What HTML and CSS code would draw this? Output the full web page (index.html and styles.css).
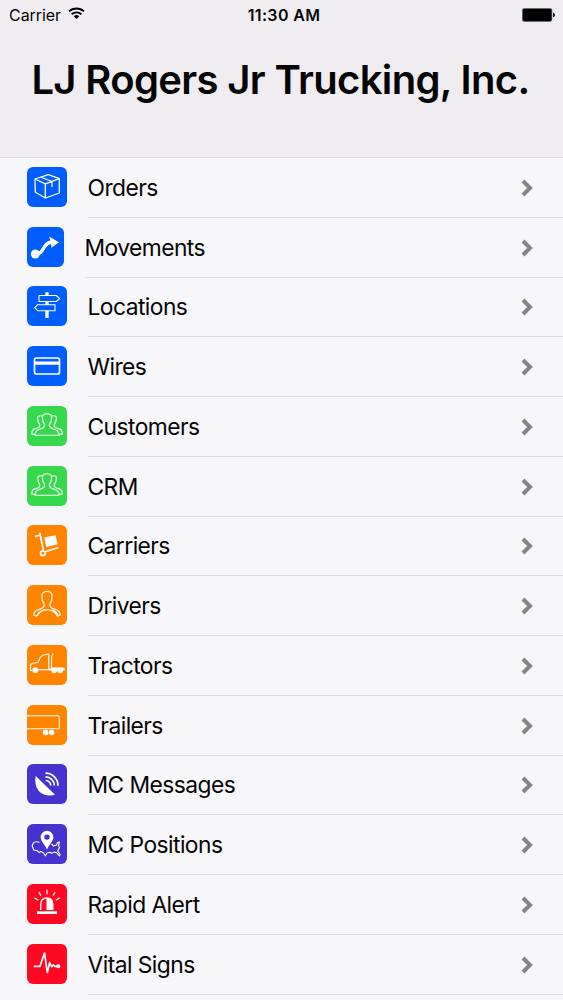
FILE: index.html
```
<!DOCTYPE html>
<html lang="en">
<head>
<meta charset="utf-8">
<title>LJ Rogers Jr Trucking, Inc.</title>
<link rel="stylesheet" href="styles.css">
</head>
<body>
<header class="header">
  <div class="status">
    <div class="carrier"><span>Carrier</span>
      <svg class="wifi" viewBox="0 0 17 12"><path d="M1 4.400a11 11 0 0 1 15 0M3.700 7.200a7.200 7.200 0 0 1 9.600 0" fill="none" stroke="#000" stroke-width="1.900"/><path d="M5.800 9.300a4 4 0 0 1 5.400 0L8.500 12z"/></svg>
    </div>
    <div class="time">11:30 AM</div>
    <div class="power"><svg class="battery" viewBox="0 0 33 14"><rect x=".4" y=".4" width="29.500" height="13" rx="1.800" fill="#000" stroke="#666" stroke-width=".7"/><path d="M31 4.800q2 .5 2 2.200t-2 2.200z"/></svg></div>
  </div>
  <h1 class="title">LJ Rogers Jr Trucking, Inc.</h1>
</header>
<main class="menu">
  <a class="row"><svg class="icon blue" viewBox="0 0 40 40"><path d="M8 12 21.300 7.700 32.300 11.700V26L18.500 31 8.300 25.300ZM8 12l10.300 4.800 14-5.100M18.300 16.800V31M13.500 10l11.500 4.500V20"/></svg><span class="label">Orders</span><svg class="chevron" viewBox="0 0 12 18"><path d="M2 2l7 7-7 7"/></svg></a>
  <a class="row inset"><svg class="icon blue narrow" viewBox="0 0 37 40"><circle class="solid" cx="8.300" cy="27" r="4.500"/><path class="thick" d="M8.500 27C18 27 15 16 24 15.300"/><path class="solid" d="M22 9.500 32 15.200 24.500 20.800 24 17 21 16.800 23.500 13.500Z"/></svg><span class="label">Movements</span><svg class="chevron" viewBox="0 0 12 18"><path d="M2 2l7 7-7 7"/></svg></a>
  <a class="row"><svg class="icon blue" viewBox="0 0 40 40"><path class="thin" d="M12 9.500H29.300L32.600 12.500 29.300 15.500H12ZM28 18.700H10.700L7.700 21.700 10.700 24.700H28Z"/><path class="thick" d="M20 6.300V9.500M20 15.500V18.700M20 24.700V32"/></svg><span class="label">Locations</span><svg class="chevron" viewBox="0 0 12 18"><path d="M2 2l7 7-7 7"/></svg></a>
  <a class="row"><svg class="icon blue" viewBox="0 0 40 40"><rect class="medium" x="7.500" y="12" width="25" height="16" rx="2"/><path class="solid" d="M7.500 15.500h25v3.200h-25z"/></svg><span class="label">Wires</span><svg class="chevron" viewBox="0 0 12 18"><path d="M2 2l7 7-7 7"/></svg></a>
  <a class="row"><svg class="icon green" viewBox="0 0 40 40"><path class="thin" d="M17.700 18.500C16 16.500 15.300 14.500 15.400 11.500 15.400 9 17.300 7.800 20 7.800S24.600 9 24.600 11.500C24.700 14.500 24 16.500 22.300 18.500 22.500 21.700 24 22.300 28 23.500 31.300 24.500 32 26 32 29.300H8C8 26 8.700 24.500 12 23.500 16 22.300 17.500 21.700 17.700 18.500ZM8 28.300H4.800C4.800 24.600 5.500 23.500 8.500 22.600 12.200 21.600 13 21 12.800 18.600 10.800 16.600 9.800 11 11.500 10.200 12.500 9.500 14 9.700 15.500 10M32 28.300h3.200c0-3.700-.7-4.800-3.700-5.700-3.700-1-4.500-1.600-4.300-4 2-2 3-7.600 1.300-8.400-1-.7-2.500-.5-4-.2"/></svg><span class="label">Customers</span><svg class="chevron" viewBox="0 0 12 18"><path d="M2 2l7 7-7 7"/></svg></a>
  <a class="row"><svg class="icon green" viewBox="0 0 40 40"><path class="thin" d="M17.700 18.500C16 16.500 15.300 14.500 15.400 11.500 15.400 9 17.300 7.800 20 7.800S24.600 9 24.600 11.500C24.700 14.500 24 16.500 22.300 18.500 22.500 21.700 24 22.300 28 23.500 31.300 24.500 32 26 32 29.300H8C8 26 8.700 24.500 12 23.500 16 22.300 17.500 21.700 17.700 18.500ZM8 28.300H4.800C4.800 24.600 5.500 23.500 8.500 22.600 12.200 21.600 13 21 12.800 18.600 10.800 16.600 9.800 11 11.500 10.200 12.500 9.500 14 9.700 15.500 10M32 28.300h3.200c0-3.700-.7-4.800-3.700-5.700-3.700-1-4.500-1.600-4.300-4 2-2 3-7.600 1.300-8.400-1-.7-2.500-.5-4-.2"/></svg><span class="label">CRM</span><svg class="chevron" viewBox="0 0 12 18"><path d="M2 2l7 7-7 7"/></svg></a>
  <a class="row"><svg class="icon orange" viewBox="0 0 40 40"><path class="medium" d="M12.800 7.800 14 14 16.500 25.500M8 11.500 13.500 10M18.300 26.800 31.300 22.500"/><circle class="medium" cx="15.800" cy="28.300" r="2.300"/><path class="solid" d="M17.300 12.500 28.500 10.200 30.700 19.300 19.200 22Z"/></svg><span class="label">Carriers</span><svg class="chevron" viewBox="0 0 12 18"><path d="M2 2l7 7-7 7"/></svg></a>
  <a class="row"><svg class="icon orange" viewBox="0 0 40 40"><path class="thin" d="M17.300 19.500C15.500 17 14.800 14.500 14.800 11.300 14.800 8 17 6.500 20 6.500S25.200 8 25.200 11.300C25.200 14.500 24.500 17 22.700 19.500 22.700 22.500 24.500 23.300 28.500 24.600 32 25.800 33.200 27.500 33.200 30L30.500 31.200C28.500 27.500 25 24.700 20 24.700S11.500 27.500 9.500 31.200L6.800 30C6.800 27.500 8 25.800 11.500 24.600 15.500 23.300 17.300 22.500 17.300 19.500Z"/><path class="solid" d="M9.300 31 12 26.500 17 24 18.500 25Q13 26 11 31ZM24 24.300Q29.500 25 31.500 30Q28.500 29.500 24 24.300Z"/></svg><span class="label">Drivers</span><svg class="chevron" viewBox="0 0 12 18"><path d="M2 2l7 7-7 7"/></svg></a>
  <a class="row"><svg class="icon orange" viewBox="0 0 40 40"><path class="thin" d="M5.500 25.500H3.500V19.500C5 18.200 8 18 11 17.300L13.500 12C15 10 18 9.500 21.800 9V24M11.500 24.600H37.500M37.500 23H24.500V12L26 8.500"/><path class="solid" d="M22 23.500h15.700v1.800H22z"/><circle class="solid" cx="8.400" cy="25.200" r="2.900"/><circle class="solid" cx="27.200" cy="25.500" r="2.800"/><circle class="solid" cx="33.200" cy="25.500" r="2.800"/></svg><span class="label">Tractors</span><svg class="chevron" viewBox="0 0 12 18"><path d="M2 2l7 7-7 7"/></svg></a>
  <a class="row"><svg class="icon orange" viewBox="0 0 40 40"><path class="thin" d="M0 10.700H31Q32.300 10.700 32.300 12V22.500Q32.300 23.800 31 23.800H0"/><circle class="solid" cx="18.600" cy="27.500" r="2.800"/><circle class="solid" cx="24.500" cy="27.500" r="2.800"/></svg><span class="label">Trailers</span><svg class="chevron" viewBox="0 0 12 18"><path d="M2 2l7 7-7 7"/></svg></a>
  <a class="row"><svg class="icon purple" viewBox="0 0 40 40"><path class="solid" d="M8.700 12 28 30.700C22 32.500 15 31 11.500 26.500 8.500 22.500 7.600 17 8.700 12Z"/><path class="medium" d="M18.500 9.200A12.300 12.300 0 0 1 31 21.700M18.500 12.900A8.600 8.600 0 0 1 27.300 21.500M18.700 16.500A5 5 0 0 1 23.700 21.500"/></svg><span class="label">MC Messages</span><svg class="chevron" viewBox="0 0 12 18"><path d="M2 2l7 7-7 7"/></svg></a>
  <a class="row"><svg class="icon purple" viewBox="0 0 40 40"><path class="thin" d="M12.500 18.300C9.500 17.500 6.800 18 6 19.500L5.200 22 6.800 26 10.500 26.800 12 28.500 14 27.500 16.500 29 18.300 31.800 20 29 23 28.300 24.500 29.200 27.500 28 29.800 29 32.500 32 33 30.500 30.700 27 32.500 23.500 31.500 21.500 32.500 18 30.700 18.300 29.500 21 26.500 22 24.500 20"/><path class="solid" fill-rule="evenodd" d="M20 6.800A6.400 6.400 0 0 1 26.400 13.200C26.400 17 22 20.500 20 25.500 18 20.500 13.600 17 13.600 13.200A6.400 6.400 0 0 1 20 6.800ZM20 10.400A2.700 2.700 0 1 0 20 15.800 2.700 2.700 0 1 0 20 10.400Z"/></svg><span class="label">MC Positions</span><svg class="chevron" viewBox="0 0 12 18"><path d="M2 2l7 7-7 7"/></svg></a>
  <a class="row"><svg class="icon red" viewBox="0 0 40 40"><path class="solid" d="M10 27.300h20v2.800H10zM19.500 13.300q7 0 7 7.200V26H19.500z"/><path d="M13.700 26V20.500Q13.700 14 20 14"/><path d="M20 5.800V10.200M12 8 13.800 11.800M28 8 26.200 11.800M7.300 13.700 11.300 16.200M32.700 13.700 28.700 16.200"/></svg><span class="label">Rapid Alert</span><svg class="chevron" viewBox="0 0 12 18"><path d="M2 2l7 7-7 7"/></svg></a>
  <a class="row"><svg class="icon red" viewBox="0 0 40 40"><path class="medium" d="M6.800 22.300H13L17.500 9 20.300 28.500 22.700 18.500 24.500 22.500 26.500 21 27.800 22.300H31"/><circle class="solid" cx="31.300" cy="22.300" r="2"/></svg><span class="label">Vital Signs</span><svg class="chevron" viewBox="0 0 12 18"><path d="M2 2l7 7-7 7"/></svg></a>
</main>
</body>
</html>
```
FILE: styles.css
```
* { box-sizing: border-box; }
body {
  margin: 0;
  height: 1000px;
  overflow: hidden;
  background: #f7f6f9;
  color: #050505;
  font-family: Inter, "Liberation Sans", sans-serif;
}
.header {
  height: 158px;
  background: #efedf0;
  border-bottom: 1px solid #dcdbde;
}
.status {
  display: grid;
  grid-template-columns: 1fr auto 1fr;
  align-items: center;
  height: 29px;
  padding: 0 8px 0 9px;
  font-size: 16px;
}
.carrier { display: flex; align-items: center; gap: 7px; letter-spacing: -0.05px; }
.wifi { width: 17px; height: 12px; margin-top: -3px; }
.time { padding-left: 4px; font-weight: 600; font-size: 16px; letter-spacing: 0.35px; }
.power { display: flex; justify-content: flex-end; }
.battery { width: 33px; height: 14px; }
.title {
  margin: 26px 0 0;
  padding-right: 2px;
  font-size: 40px;
  line-height: 50px;
  font-weight: 600;
  letter-spacing: -0.65px;
  text-align: center;
  white-space: nowrap;
}
.menu { display: flex; flex-direction: column; }
.row {
  display: grid;
  grid-template-columns: auto 1fr auto;
  align-items: center;
  gap: 20.5px;
  height: 59.75px;
  padding: 0 30px 0 27px;
  background: linear-gradient(#dddce0, #dddce0) 88px 100% / 100% 1px no-repeat;
}
.inset { background-position: 85px 100%; }
.icon {
  width: 40px;
  height: 40px;
  margin-bottom: 2px;
  border-radius: 6px;
  fill: none;
  stroke: #fff;
  stroke-width: 1.3;
  stroke-linejoin: round;
}
.narrow { width: 37px; }
.blue { background: #005eff; }
.green { background: #35d94b; }
.orange { background: #ff8500; }
.purple { background: #4632cf; }
.red { background: #ff0824; }
.thin { stroke-width: 1.1; }
.medium { stroke-width: 1.7; }
.thick { stroke-width: 3.4; }
.solid { fill: #fff; stroke: none; }
.label { font-size: 22.8px; line-height: 30px; letter-spacing: -0.55px; white-space: nowrap; }
.chevron { width: 12px; height: 18px; fill: none; stroke: #858487; stroke-width: 4; }
```
